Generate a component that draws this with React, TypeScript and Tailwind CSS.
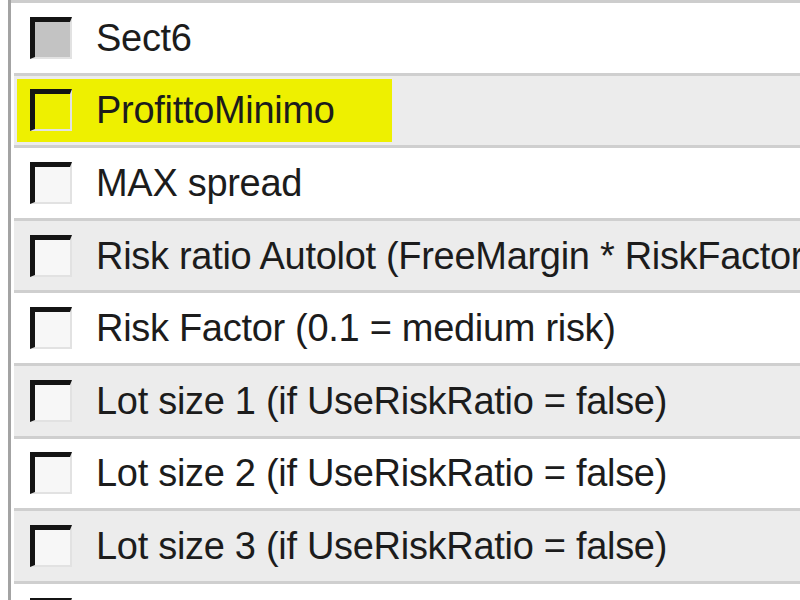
import React from 'react'

type Row = {
  label: string
  shaded: boolean
  state?: 'mixed' | 'off'
  highlight?: boolean
}

const rows: Row[] = [
  { label: 'Sect6', shaded: false, state: 'mixed' },
  { label: 'ProfittoMinimo', shaded: true, highlight: true },
  { label: 'MAX spread', shaded: false },
  { label: 'Risk ratio Autolot (FreeMargin * RiskFactor)', shaded: true },
  { label: 'Risk Factor (0.1 = medium risk)', shaded: false },
  { label: 'Lot size 1 (if UseRiskRatio = false)', shaded: true },
  { label: 'Lot size 2 (if UseRiskRatio = false)', shaded: false },
  { label: 'Lot size 3 (if UseRiskRatio = false)', shaded: true },
  // next row is only peeking in at the bottom edge
  { label: '', shaded: false },
]

function CheckBox({ state, highlight }: { state?: 'mixed' | 'off'; highlight?: boolean }) {
  const inner = state === 'mixed' ? 'bg-[#c3c3c3]' : highlight ? 'bg-transparent' : 'bg-[#f7f7f7]'
  return (
    <div className={`w-[42px] h-[42px] shrink-0 border-t-[5px] border-l-[5px] border-r-2 border-b-2 border-t-[#141414] border-l-[#141414] border-r-[#e2e2e2] border-b-[#e2e2e2] ${inner}`} />
  )
}

export default function App() {
  return (
    <div className="w-[800px] h-[600px] overflow-hidden bg-white flex" style={{ fontFamily: '"Liberation Sans", Arial, sans-serif' }}>
      <div className="w-[8px] shrink-0" />
      <div className="w-[3px] shrink-0 bg-[#a3a3a3]" />
      <div className="flex-1 flex flex-col pl-[3px] border-t-[3px] border-[#cdcdcd]">
        {rows.map((r, i) => (
          <div
            key={i}
            className={`h-[72.6px] shrink-0 flex items-center border-b-[3px] border-[#cfcfcf] ${r.shaded ? 'bg-[#ececec]' : 'bg-white'}`}
          >
            <div className={`flex items-center h-[63px] ml-[3px] pl-[13px] ${r.highlight ? 'bg-[#eef000] w-[375px]' : ''}`}>
              <CheckBox state={r.state} highlight={r.highlight} />
              {r.label && (
                <span className="ml-[24px] text-[38px] leading-none text-[#1c1c1c] whitespace-nowrap tracking-[-0.3px]">
                  {r.label}
                </span>
              )}
            </div>
          </div>
        ))}
      </div>
    </div>
  )
}
